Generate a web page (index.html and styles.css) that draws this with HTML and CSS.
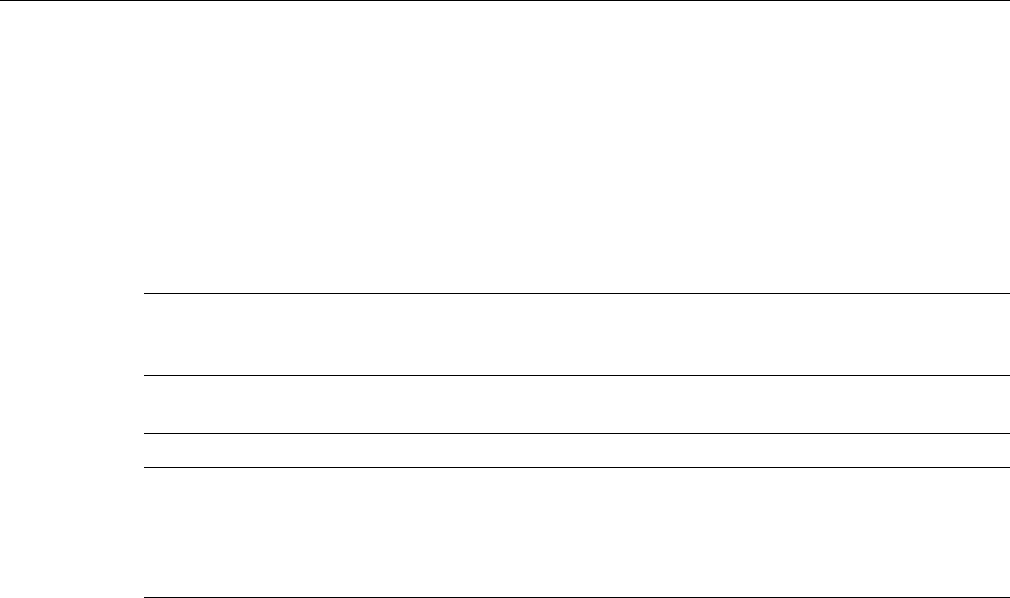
FILE: index.html
```html
<!DOCTYPE html>
<html lang="en">
<head>
<meta charset="utf-8">
<title>Page</title>
<link rel="stylesheet" href="styles.css">
</head>
<body>
<header class="topbar"></header>
<main class="content">
  <div class="row row-a"></div>
  <div class="row row-b"></div>
  <div class="row row-c"></div>
  <div class="row row-d"></div>
  <div class="row row-end"></div>
</main>
</body>
</html>
```
FILE: styles.css
```css
html, body {
  margin: 0;
  padding: 0;
  background: #ffffff;
  font-family: "Liberation Sans", Arial, sans-serif;
  overflow: hidden;
}
.topbar {
  box-sizing: border-box;
  height: 293px;
  border-top: 1px solid #000000;
}
.content {
  display: flex;
  flex-direction: column;
  margin-left: 144px;
}
.row {
  box-sizing: border-box;
  border-top: 1px solid #000000;
}
.row-a { height: 82px; }
.row-b { height: 58px; }
.row-c { height: 34px; }
.row-d { height: 130px; }
.row-end { height: 1px; }
```
